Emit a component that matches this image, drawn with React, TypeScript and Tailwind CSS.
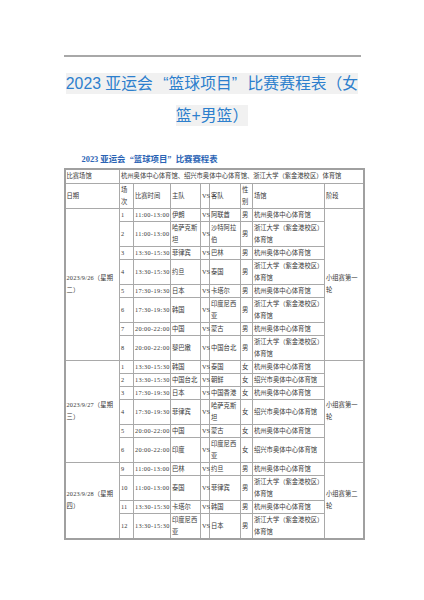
type Game = [string, string, string, string, string, string]

const venueA = '杭州奥体中心体育馆'
const venueB = '浙江大学（紫金港校区）体育馆'
const venueC = '绍兴市奥体中心体育馆'

const days: { date: string; stage: string; games: Game[] }[] = [
  {
    date: '2023/9/26（星期二）',
    stage: '小组赛第一轮',
    games: [
      ['1', '11:00-13:00', '伊朗', '阿联酋', '男', venueA],
      ['2', '11:00-13:00', '哈萨克斯坦', '沙特阿拉伯', '男', venueB],
      ['3', '13:30-15:30', '菲律宾', '巴林', '男', venueA],
      ['4', '13:30-15:30', '约旦', '泰国', '男', venueB],
      ['5', '17:30-19:30', '日本', '卡塔尔', '男', venueA],
      ['6', '17:30-19:30', '韩国', '印度尼西亚', '男', venueB],
      ['7', '20:00-22:00', '中国', '蒙古', '男', venueA],
      ['8', '20:00-22:00', '黎巴嫩', '中国台北', '男', venueB],
    ],
  },
  {
    date: '2023/9/27（星期三）',
    stage: '小组赛第一轮',
    games: [
      ['1', '13:30-15:30', '韩国', '泰国', '女', venueA],
      ['2', '13:30-15:30', '中国台北', '朝鲜', '女', venueC],
      ['3', '17:30-19:30', '日本', '中国香港', '女', venueA],
      ['4', '17:30-19:30', '菲律宾', '哈萨克斯坦', '女', venueC],
      ['5', '20:00-22:00', '中国', '蒙古', '女', venueA],
      ['6', '20:00-22:00', '印度', '印度尼西亚', '女', venueC],
    ],
  },
  {
    date: '2023/9/28（星期四）',
    stage: '小组赛第二轮',
    games: [
      ['9', '11:00-13:00', '巴林', '约旦', '男', venueA],
      ['10', '11:00-13:00', '泰国', '菲律宾', '男', venueB],
      ['11', '13:30-15:30', '卡塔尔', '韩国', '男', venueA],
      ['12', '13:30-15:30', '印度尼西亚', '日本', '男', venueB],
    ],
  },
]

const td = 'border border-[#a9a9a9] px-[1px] py-0 align-middle text-left font-normal'

// full-width quote marks, as the Song font in the source lays them out
function Title() {
  return (
    <>
      2023 亚运会<span className="inline-block w-[1em] text-right">“</span>篮球项目
      <span className="inline-block w-[1em] text-left">”</span>比赛赛程表
    </>
  )
}

export default function App() {
  return (
    <div className="min-h-[600px] bg-white pt-[55px]" style={{ fontFamily: '"Liberation Serif", "Noto Sans CJK SC", serif' }}>
      <div className="mx-auto w-[297px]">
        <div className="h-[2px] bg-[#a8a8a8]" />

        <h1
          className="mt-[11px] text-center text-[15.8px] font-normal leading-[32px] whitespace-nowrap text-[#2d7fcd]"
          style={{ fontFamily: '"Liberation Sans", "Noto Sans CJK SC", sans-serif' }}
        >
          <span className="bg-[#f1f1f1] py-[2px] [box-decoration-break:clone]">
            <Title />（女
            <br />
            篮+男篮）
          </span>
        </h1>

        <p className="mt-[22px] pl-[18px] text-[8.4px] font-bold leading-[12px] text-[#2a63b4]">
          <Title />
        </p>

        <table className="mt-[2px] w-[299px] table-fixed border-collapse border-2 border-[#a0a0a0] text-[6.3px] leading-[12px] text-[#383838]">
          <colgroup>
            <col className="w-[55px]" />
            <col className="w-[14px]" />
            <col className="w-[37px]" />
            <col className="w-[30px]" />
            <col className="w-[9px]" />
            <col className="w-[31px]" />
            <col className="w-[12px]" />
            <col className="w-[72px]" />
            <col className="w-[39px]" />
          </colgroup>
          <tbody>
            <tr className="h-[14px]">
              <td className={td}>比赛场馆</td>
              <td className={td} colSpan={8}>
                杭州奥体中心体育馆、绍兴市奥体中心体育馆、浙江大学（紫金港校区）体育馆
              </td>
            </tr>
            <tr>
              <td className={td}>日期</td>
              <td className={td}>场次</td>
              <td className={td}>比赛时间</td>
              <td className={td}>主队</td>
              <td className={td}>VS</td>
              <td className={td}>客队</td>
              <td className={td}>性别</td>
              <td className={td}>场馆</td>
              <td className={td}>阶段</td>
            </tr>
            {days.map((day) =>
              day.games.map((g, i) => (
                <tr key={day.date + i}>
                  {i === 0 && (
                    <td className={td + ' tracking-[0.2px]'} rowSpan={day.games.length}>
                      {day.date}
                    </td>
                  )}
                  <td className={td}>{g[0]}</td>
                  <td className={td + ' whitespace-nowrap tracking-[0.35px]'}>{g[1]}</td>
                  <td className={td}>{g[2]}</td>
                  <td className={td + ' whitespace-nowrap'}>VS</td>
                  <td className={td}>{g[3]}</td>
                  <td className={td}>{g[4]}</td>
                  <td className={td}>{g[5]}</td>
                  {i === 0 && (
                    <td className={td} rowSpan={day.games.length}>
                      {day.stage}
                    </td>
                  )}
                </tr>
              ))
            )}
          </tbody>
        </table>
      </div>
    </div>
  )
}
